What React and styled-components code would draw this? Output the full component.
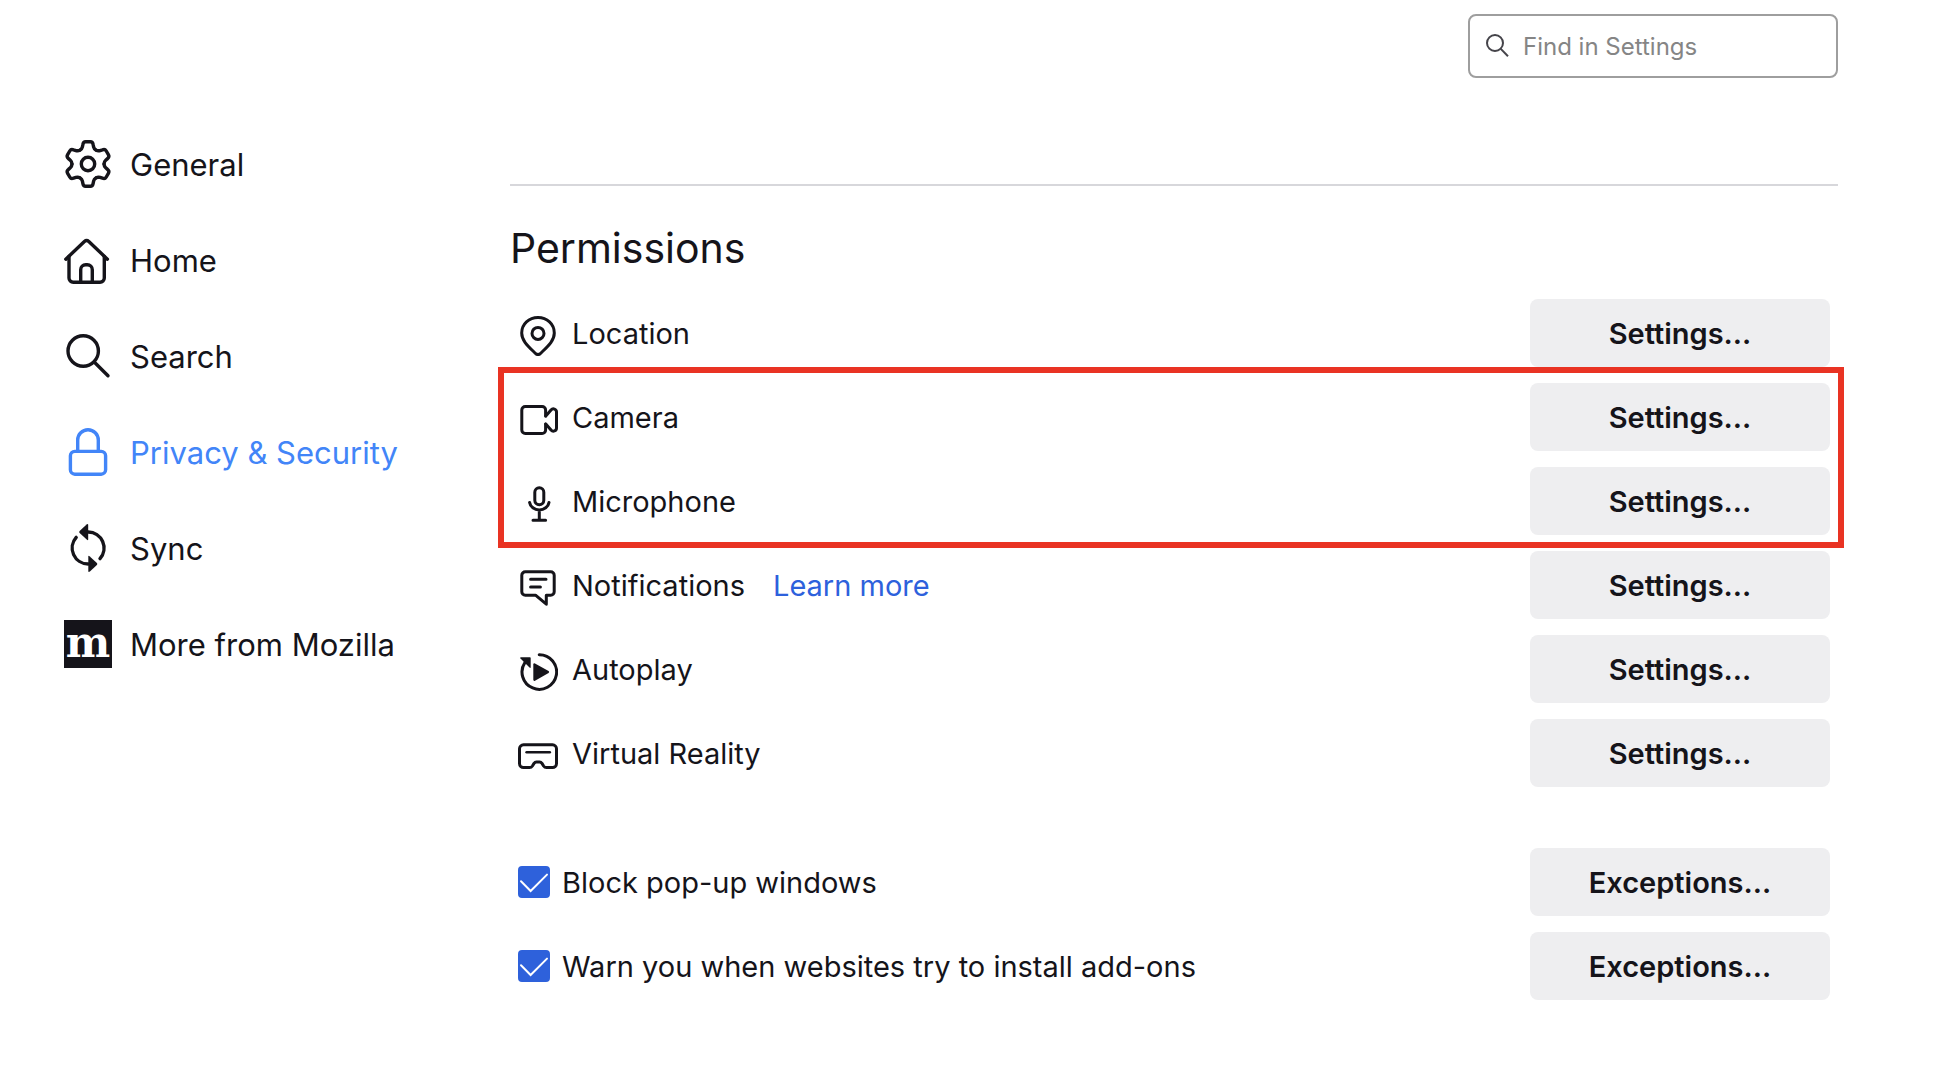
import React from 'react';
import styled, { createGlobalStyle } from 'styled-components'

const GlobalStyle = createGlobalStyle`
  *, *::before, *::after {
    box-sizing: border-box;
  }
  body {
    margin: 0;
    background: #ffffff;
    color: #15141a;
    font-family: Inter, "Liberation Sans", sans-serif;
    font-size: 29px;
    line-height: 36px;
  }
`

/* Sidebar icons, 48px grid */

const GearIcon = () => (
  <NavIcon viewBox="0 0 48 48" aria-hidden="true">
    <g transform="translate(24 24)">
      {[0, 60, 120, 180, 240, 300].map(angle => (
        <path
          key={angle}
          transform={`rotate(${angle})`}
          d="M-8 -13.9C-6.3 -14.9 -5.9 -15.8 -5.6 -17.2L-5.1 -19.6Q-4.6 -22.3 -2.4 -22.3H2.4Q4.6 -22.3 5.1 -19.6L5.6 -17.2C5.9 -15.8 6.3 -14.9 8 -13.9"
        />
      ))}
      <circle r="6.7" />
    </g>
  </NavIcon>
)

const HomeIcon = () => (
  <NavIcon viewBox="0 0 48 48" aria-hidden="true">
    <path d="M1.8 23.2L20.4 5.5Q22.6 3.6 24.8 5.5L43.4 23.2" />
    <path d="M5 20.5V42a4.3 4.3 0 0 0 4.3 4.3H36a4.3 4.3 0 0 0 4.3-4.3V20.5" />
    <path d="M16.7 46V33.7a5 5 0 0 1 5-5h1.6a5 5 0 0 1 5 5V46" />
  </NavIcon>
)

const SearchIcon = () => (
  <NavIcon viewBox="0 0 48 48" aria-hidden="true">
    <circle cx="19.2" cy="19" r="15.2" />
    <path d="M30.2 30L44 43.8" />
  </NavIcon>
)

const LockIcon = () => (
  <NavIcon viewBox="0 0 48 48" aria-hidden="true">
    <rect x="6.4" y="23.4" width="35.2" height="22.8" rx="4.4" />
    <path d="M13.7 23V12a10.3 10.3 0 0 1 20.6 0V23" />
  </NavIcon>
)

const SyncIcon = () => (
  <NavIcon viewBox="0 0 48 48" aria-hidden="true">
    <path d="M12.2 13.4A16 16 0 0 0 24.2 40" />
    <path d="M24.2 8A16 16 0 0 1 36 34.6" />
    <path className="solid" d="M24.2 1V15.5Q24 16.6 23 15.8L15.6 9Q14.8 8 15.6 7L22.6 0.5Q24.2 -0.5 24.2 1Z" />
    <path className="solid" d="M24.3 47V32.5Q24.5 31.4 25.5 32.2L32.9 39Q33.7 40 32.9 41L25.9 47.5Q24.3 48.5 24.3 47Z" />
  </NavIcon>
)

const MozillaIcon = () => <MozillaLogo aria-hidden="true">m</MozillaLogo>

/* Permission icons, 40px grid */

const LocationIcon = () => (
  <RowIcon viewBox="0 0 40 40" aria-hidden="true">
    <path d="M20 1.5C29 1.5 36.3 8 36.3 17C36.3 25 29.4 30.6 22.2 37.7Q20 39.4 17.8 37.7C10.6 30.6 3.7 25 3.7 17C3.7 8 11 1.5 20 1.5Z" />
    <circle cx="20" cy="17.4" r="6" />
  </RowIcon>
)

const CameraIcon = () => (
  <RowIcon viewBox="0 0 40 40" aria-hidden="true">
    <path d="M27.6 16V10a3.5 3.5 0 0 0-3.5-3.5H7.3A3.5 3.5 0 0 0 3.8 10v20a3.5 3.5 0 0 0 3.5 3.5h16.8a3.5 3.5 0 0 0 3.5-3.5v-6" />
    <path d="M27.8 16L33 10C35 7.8 38.5 9 38.5 12V28C38.5 31 35 32.2 33 30L27.8 24" />
  </RowIcon>
)

const MicrophoneIcon = () => (
  <RowIcon viewBox="0 0 40 40" aria-hidden="true">
    <rect x="16.8" y="3.7" width="9" height="17" rx="4.5" />
    <path d="M11.6 18.4a9.8 8.8 0 0 0 19.4 0M21.3 26.5V36M15 36.3H27.6" />
  </RowIcon>
)

const NotificationsIcon = () => (
  <RowIcon viewBox="0 0 40 40" aria-hidden="true">
    <path d="M7.3 3.8H32.7a3.5 3.5 0 0 1 3.5 3.5V23.7a3.5 3.5 0 0 1-3.5 3.5H28.3V36.2L17.5 27.2H7.3a3.5 3.5 0 0 1-3.5-3.5V7.3a3.5 3.5 0 0 1 3.5-3.5Z" />
    <path d="M12.6 11.3H28M12.6 19H22.4" />
  </RowIcon>
)

const AutoplayIcon = () => (
  <RowIcon viewBox="0 0 40 40" aria-hidden="true">
    <path d="M21.2 2.7A17.3 17.3 0 1 1 7 10.3" />
    <path className="solid" d="M3 5.3H11.9Q12.7 5.3 12.7 6.1V15Q12.7 16.6 11.5 15.5L2.5 6.5Q1.6 5.3 3 5.3Z" />
    <path className="solid" d="M15.3 12.6Q15.4 10.8 17 11.5L30.6 19Q31.8 20 30.6 21L17 28.7Q15.4 29.4 15.3 27.6Z" />
  </RowIcon>
)

const VirtualRealityIcon = () => (
  <RowIcon viewBox="0 0 40 40" aria-hidden="true">
    <path d="M5.5 8.8H34.5a4 4 0 0 1 4 4V27.5a4 4 0 0 1-4 4H28.5Q26.6 31.5 25.6 30L24 27.4Q23 26 21.6 26H18.4Q17 26 16 27.4L14.4 30Q13.4 31.5 11.5 31.5H5.5a4 4 0 0 1-4-4V12.8a4 4 0 0 1 4-4Z" />
    <path strokeWidth="2.6" d="M8.6 16.2H31.8" />
  </RowIcon>
)

const categories = [
  { id: 'general', label: 'General', icon: GearIcon },
  { id: 'home', label: 'Home', icon: HomeIcon },
  { id: 'search', label: 'Search', icon: SearchIcon },
  { id: 'privacy', label: 'Privacy & Security', icon: LockIcon, selected: true },
  { id: 'sync', label: 'Sync', icon: SyncIcon },
  { id: 'more', label: 'More from Mozilla', icon: MozillaIcon },
]

const Permission = ({ icon: Icon, label, learnMore }) => (
  <StyledRow>
    <Icon />
    <StyledText>{label}</StyledText>
    {learnMore && <StyledLink href="#learn-more">Learn more</StyledLink>}
    <StyledButton type="button" aria-label={`${label} Settings...`}>Settings...</StyledButton>
  </StyledRow>
)

const CheckOption = ({ label }) => (
  <StyledRow>
    <StyledCheckLabel>
      <StyledCheckBox>
        <StyledCheckInput type="checkbox" defaultChecked />
        <StyledTick viewBox="0 0 32 32" aria-hidden="true">
          <path d="M3 15.2L12.6 25L29 8.6" />
        </StyledTick>
      </StyledCheckBox>
      <StyledText>{label}</StyledText>
    </StyledCheckLabel>
    <StyledButton type="button">Exceptions...</StyledButton>
  </StyledRow>
)

const App = () => {

  const categoriesRender = categories.map(({ id, label, icon: Icon, selected }) => (
    <StyledNavLink key={id} href={`#${id}`} $selected={selected}>
      <Icon />
      <StyledText>{label}</StyledText>
    </StyledNavLink>
  ))

  return (
    <StyledPage>
      <GlobalStyle />

      {/* Left */}
      <StyledSidebar>{categoriesRender}</StyledSidebar>

      {/* Right */}
      <StyledMain>
        <StyledSearchBox>
          <StyledSearchGlyph viewBox="0 0 24 24" aria-hidden="true">
            <circle cx="10" cy="9" r="8" />
            <path d="M15.8 14.9L23 22.2" />
          </StyledSearchGlyph>
          <StyledSearchInput type="text" placeholder="Find in Settings" aria-label="Find in Settings" />
        </StyledSearchBox>

        <StyledSection>
          <StyledTitle>Permissions</StyledTitle>
          <StyledRows>
            <Permission icon={LocationIcon} label="Location" />
            <StyledHighlight>
              <Permission icon={CameraIcon} label="Camera" />
              <Permission icon={MicrophoneIcon} label="Microphone" />
            </StyledHighlight>
            <Permission icon={NotificationsIcon} label="Notifications" learnMore />
            <Permission icon={AutoplayIcon} label="Autoplay" />
            <Permission icon={VirtualRealityIcon} label="Virtual Reality" />
          </StyledRows>
          <StyledOptions>
            <CheckOption label="Block pop-up windows" />
            <CheckOption label="Warn you when websites try to install add-ons" />
          </StyledOptions>
        </StyledSection>
      </StyledMain>

    </StyledPage>
  );
}

const StyledPage = styled.div`
  display: flex;
  padding: 14px 112px 72px 64px;
`
const StyledSidebar = styled.nav`
  display: flex;
  flex-direction: column;
  flex: 0 0 446px;
  gap: 48px;
  padding-top: 126px;
`
const StyledNavLink = styled.a`
  display: flex;
  align-items: center;
  gap: 18px;
  height: 48px;
  color: ${props => props.$selected ? '#4285f8' : '#15141a'};
  font-size: 31px;
  text-decoration: none;
`
const StyledText = styled.span`
  padding-top: 2px;
`
const NavIcon = styled.svg`
  flex: none;
  width: 48px;
  height: 48px;
  fill: none;
  stroke: currentColor;
  stroke-width: 3.4;
  stroke-linecap: round;
  stroke-linejoin: round;
  overflow: visible;
  .solid {
    fill: currentColor;
    stroke: none;
  }
`
const MozillaLogo = styled.span`
  display: flex;
  align-items: center;
  justify-content: center;
  flex: none;
  width: 48px;
  height: 48px;
  padding-bottom: 3px;
  background: #15141a;
  color: #ffffff;
  font-family: "DejaVu Serif", serif;
  font-size: 42px;
  font-weight: 700;
  line-height: 42px;
`
const StyledMain = styled.main`
  display: flex;
  flex-direction: column;
  flex: 1;
  min-width: 0;
`
const StyledSearchBox = styled.label`
  display: flex;
  align-items: center;
  align-self: flex-end;
  gap: 14px;
  width: 370px;
  height: 64px;
  padding: 0 15px;
  border: 2px solid #9e9e9e;
  border-radius: 8px;
`
const StyledSearchGlyph = styled.svg`
  flex: none;
  width: 24px;
  height: 24px;
  fill: none;
  stroke: #45444a;
  stroke-width: 2;
`
const StyledSearchInput = styled.input`
  flex: 1;
  min-width: 0;
  padding: 0;
  border: none;
  outline: none;
  background: none;
  color: #15141a;
  font-family: inherit;
  font-size: 24px;
  &::placeholder {
    color: #858585;
    opacity: 1;
  }
`
const StyledSection = styled.section`
  margin-top: 106px;
  border-top: 2px solid #d7d7db;
`
const StyledTitle = styled.h2`
  margin: 36px 0 25px;
  font-size: 41px;
  font-weight: 400;
  line-height: 52px;
`
const StyledRows = styled.div`
  display: flex;
  flex-direction: column;
  gap: 16px;
`
const StyledOptions = styled(StyledRows)`
  margin-top: 61px;
`
/* red frame drawn over the rows it wraps */
const StyledHighlight = styled(StyledRows)`
  position: relative;
  &::after {
    content: '';
    position: absolute;
    inset: -16px -6px -13px -12px;
    border: 6px solid #e93323;
    pointer-events: none;
  }
`
const StyledRow = styled.div`
  display: flex;
  align-items: center;
  min-height: 68px;
  padding: 0 8px;
`
const RowIcon = styled.svg`
  flex: none;
  width: 40px;
  height: 40px;
  margin: 6px 14px 0 0;
  fill: none;
  stroke: currentColor;
  stroke-width: 3;
  stroke-linecap: round;
  stroke-linejoin: round;
  .solid {
    fill: currentColor;
    stroke: none;
  }
`
const StyledLink = styled.a`
  margin-left: 28px;
  padding-top: 2px;
  color: #2d61dc;
  text-decoration: none;
`
const StyledButton = styled.button`
  width: 300px;
  height: 68px;
  margin-left: auto;
  border: none;
  border-radius: 8px;
  background: #eeeef0;
  color: #15141a;
  font-family: inherit;
  font-size: 29px;
  font-weight: 600;
`
const StyledCheckLabel = styled.label`
  display: flex;
  align-items: center;
  gap: 12px;
`
const StyledCheckBox = styled.span`
  display: grid;
  flex: none;
  width: 32px;
  height: 32px;
  > * {
    grid-area: 1 / 1;
  }
`
const StyledCheckInput = styled.input`
  width: 32px;
  height: 32px;
  margin: 0;
  appearance: none;
  border: 2px solid #8f8f9d;
  border-radius: 4px;
  &:checked {
    border-color: #2e61db;
    background: #2e61db;
  }
`
const StyledTick = styled.svg`
  width: 32px;
  height: 32px;
  fill: none;
  stroke: #ffffff;
  stroke-width: 2;
  stroke-linecap: round;
  pointer-events: none;
`

export default App;
